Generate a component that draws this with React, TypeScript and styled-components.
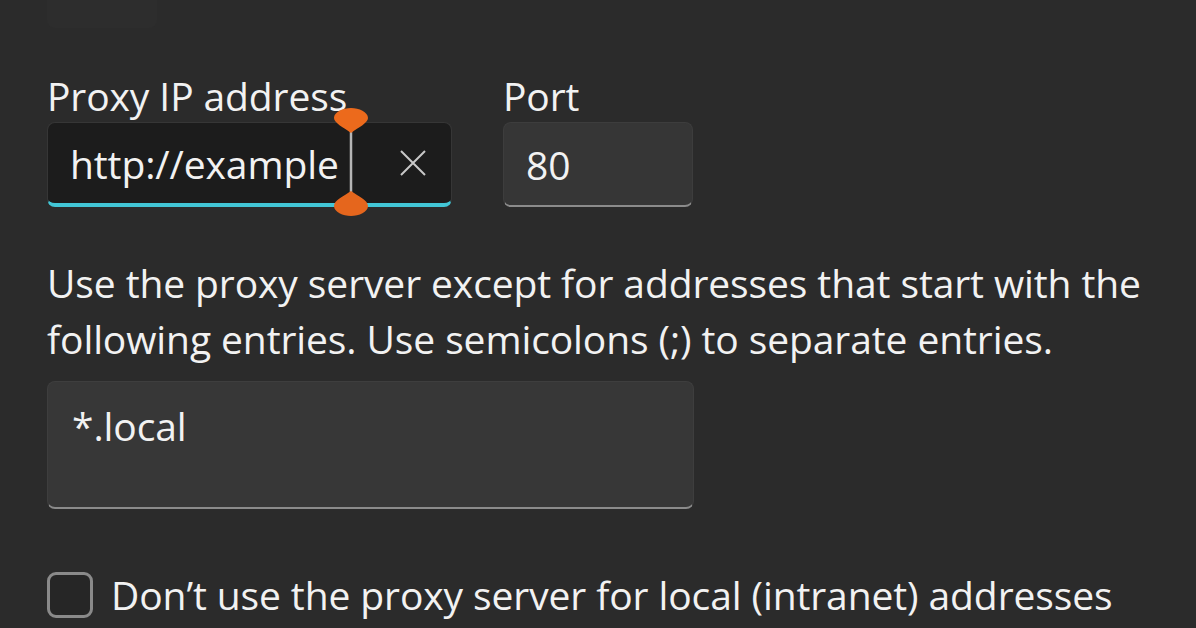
import React, { FC } from 'react';
import styled, { createGlobalStyle } from 'styled-components';

const GlobalStyle = createGlobalStyle`
  html, body {
    margin: 0;
    padding: 0;
    background-color: #2b2b2b;
    overflow: hidden;
  }
  body {
    font-family: 'Open Sans', 'Noto Sans', 'Liberation Sans', sans-serif;
    color: #f2f2f2;
  }
`;

const Page = styled.div`
  width: 1196px;
  height: 628px;
  padding: 0 0 0 47px;
  box-sizing: border-box;
  display: flex;
  flex-direction: column;
  font-size: 39px;
  letter-spacing: -0.1px;
`;

const TopStub = styled.div`
  width: 110px;
  height: 28px;
  margin-bottom: 44px;
  border-radius: 0 0 8px 8px;
  background-color: #2d2d2d;
`;

const FieldRow = styled.div`
  display: flex;
  gap: 51px;
`;

const Field = styled.div`
  display: flex;
  flex-direction: column;
`;

const Label = styled.div`
  height: 48px;
  line-height: 48px;
  margin-bottom: 2px;
`;

const TextBox = styled.div<{ $focused?: boolean; $width: number }>`
  position: relative;
  width: ${(p) => p.$width}px;
  height: 85px;
  box-sizing: border-box;
  display: flex;
  align-items: center;
  padding: 0 22px;
  border-radius: 8px;
  border: 1px solid ${(p) => (p.$focused ? '#363636' : '#3d3d3d')};
  border-bottom: ${(p) => (p.$focused ? '4px solid #42c6d6' : '2px solid #8b8b8b')};
  background-color: ${(p) => (p.$focused ? '#1c1c1c' : '#363636')};
`;

const Value = styled.span`
  white-space: nowrap;
`;

const ClearButton = styled.div`
  width: 44px;
  height: 44px;
  margin-left: auto;
  margin-right: -6px;
  display: flex;
  align-items: center;
  justify-content: center;
  color: #c8c8c8;
`;

const Caret = styled.div`
  position: absolute;
  left: 285px;
  top: -16px;
  width: 36px;
  height: 110px;
  pointer-events: none;
`;

const Description = styled.p`
  margin: 48px 0 0;
  line-height: 56px;
  white-space: nowrap;
`;

const TextArea = styled.div`
  width: 647px;
  height: 128px;
  box-sizing: border-box;
  margin-top: 14px;
  padding: 20px 24px;
  line-height: 48px;
  border-radius: 8px;
  border: 1px solid #3e3e3e;
  border-bottom: 2px solid #8b8b8b;
  background-color: #373737;
`;

const CheckRow = styled.label`
  display: flex;
  align-items: center;
  gap: 18px;
  margin-top: 62px;
`;

const CheckBox = styled.div`
  width: 46px;
  height: 46px;
  box-sizing: border-box;
  border-radius: 9px;
  border: 3px solid #8a8a8a;
  background-color: #262626;
`;

const CheckLabel = styled.span`
  white-space: nowrap;
  line-height: 48px;
`;

const SelectionCaret: FC = () => (
  <Caret>
    <svg width="36" height="110" viewBox="0 0 36 110">
      <line x1="18" y1="22" x2="18" y2="90" stroke="#b5b5b5" strokeWidth="2.5" />
      <path d="M18 1 C26 1 35 5 35 11 C35 16 26 20 18 26 C10 20 1 16 1 11 C1 5 10 1 18 1 Z" fill="#ec6a1c" />
      <path d="M18 84 C26 90 35 93 35 99 C35 105 26 109 18 109 C10 109 1 105 1 99 C1 93 10 90 18 84 Z" fill="#e5661d" />
    </svg>
  </Caret>
);

const App: FC = () => {
  return (
    <Page>
      <GlobalStyle />
      <TopStub />
      <FieldRow>
        <Field>
          <Label>Proxy IP address</Label>
          <TextBox $focused $width={405}>
            <Value>http://example</Value>
            <ClearButton>
              <svg width="26" height="26" viewBox="0 0 26 26">
                <path d="M1 1 L25 25 M25 1 L1 25" stroke="currentColor" strokeWidth="2" />
              </svg>
            </ClearButton>
            <SelectionCaret />
          </TextBox>
        </Field>
        <Field>
          <Label>Port</Label>
          <TextBox $width={190}>
            <Value>80</Value>
          </TextBox>
        </Field>
      </FieldRow>
      <Description>
        Use the proxy server except for addresses that start with the
        <br />
        following entries. Use semicolons (;) to separate entries.
      </Description>
      <TextArea>*.local</TextArea>
      <CheckRow>
        <CheckBox />
        <CheckLabel>Don’t use the proxy server for local (intranet) addresses</CheckLabel>
      </CheckRow>
    </Page>
  );
};

export default App;
